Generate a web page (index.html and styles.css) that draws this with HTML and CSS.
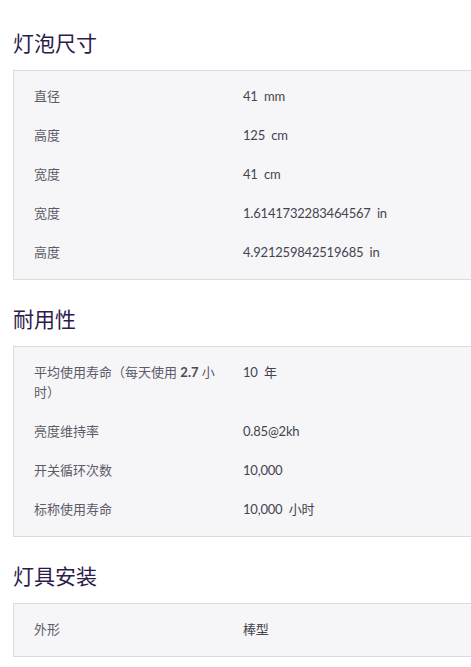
FILE: index.html
```html
<!DOCTYPE html>
<html lang="zh-CN">
<head>
    <meta charset="UTF-8">
    <title>产品规格</title>
    <link rel="stylesheet" href="styles.css">
</head>
<body>
    <div class="specs">
        <h2 class="group-title">灯泡尺寸</h2>
        <ul class="group">
            <li><span class="label">直径</span><span class="value">41&nbsp; mm</span></li>
            <li><span class="label">高度</span><span class="value">125&nbsp; cm</span></li>
            <li><span class="label">宽度</span><span class="value">41&nbsp; cm</span></li>
            <li><span class="label">宽度</span><span class="value">1.6141732283464567&nbsp; in</span></li>
            <li><span class="label">高度</span><span class="value">4.921259842519685&nbsp; in</span></li>
        </ul>

        <h2 class="group-title">耐用性</h2>
        <ul class="group">
            <li><span class="label">平均使用寿命（每天使用 <b>2.7</b> 小时）</span><span class="value">10&nbsp; 年</span></li>
            <li><span class="label">亮度维持率</span><span class="value">0.85@2kh</span></li>
            <li><span class="label">开关循环次数</span><span class="value">10,000</span></li>
            <li><span class="label">标称使用寿命</span><span class="value">10,000&nbsp; 小时</span></li>
        </ul>

        <h2 class="group-title">灯具安装</h2>
        <ul class="group">
            <li><span class="label">外形</span><span class="value">棒型</span></li>
        </ul>
    </div>
</body>
</html>
```

FILE: styles.css
```css
html,
body,
h2,
ul,
li {
    margin: 0;
    padding: 0;
}
html {
    overflow-x: hidden;
}
body {
    background: #fff;
    font: 13px/20px "Lato", "Noto Sans CJK SC", sans-serif;
    color: #3a3a44;
}
.specs {
    padding: 4px 0 20px 13px;
}
.group-title {
    margin: 25px 0 13px;
    font-size: 21px;
    line-height: 28px;
    font-weight: 400;
    color: #2e1a4c;
}
.group {
    list-style: none;
    width: 500px;
    padding: 5px 0 8px;
    background: #f6f6f9;
    border: 1px solid #dcdce0;
}
.group li {
    display: grid;
    grid-template-columns: 190px 1fr;
    column-gap: 19px;
    padding: 9.5px 0 9.5px 20px;
}
.label {
    color: #5c5c68;
}
.label b {
    font-weight: 700;
    color: #4a4a56;
}
.value {
    color: #44444e;
    letter-spacing: -0.2px;
}
```
